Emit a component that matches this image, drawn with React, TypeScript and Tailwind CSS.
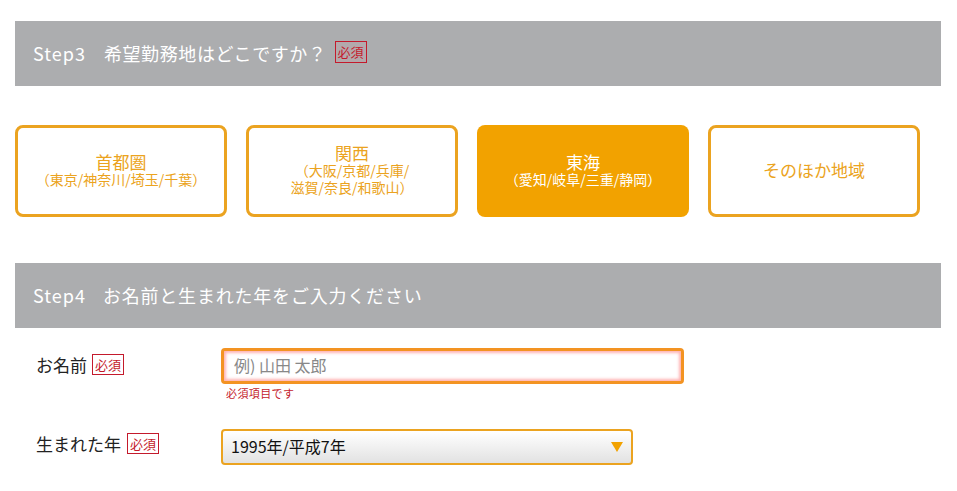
import React from "react";

const font = { fontFamily: '"Noto Sans CJK JP", "Noto Sans", sans-serif' };

function Badge({ className = "" }: { className?: string }) {
  return (
    <span
      className={`inline-flex items-center justify-center border border-[#c41a2c] text-[#c41a2c] text-[13px] leading-none h-[21px] px-[2px] ${className}`}
    >
      必須
    </span>
  );
}

function Area({
  title,
  lines,
  active,
}: {
  title: string;
  lines: string[];
  active?: boolean;
}) {
  return (
    <div
      className={`w-[212px] h-[92px] rounded-[8px] flex flex-col items-center justify-center text-center ${
        active
          ? "bg-[#f2a200] text-white"
          : "border-[3px] border-[#eba320] bg-white text-[#eba320]"
      }`}
    >
      <div className="text-[17px] leading-[18px] mt-[-2px]">{title}</div>
      {lines.map((l, i) => (
        <div key={i} className="text-[14px] leading-[17px]">
          {l}
        </div>
      ))}
    </div>
  );
}

export default function App() {
  return (
    <div className="bg-white w-[957px] h-[491px] overflow-hidden" style={font}>
      <div className="ml-[15px] w-[926px] pt-[21px]">
        <div className="h-[65px] bg-[#acadaf] flex items-center pl-[18px] text-white text-[18px] tracking-[0.6px]">
          <span className="tracking-[1px]">Step3</span>
          <span className="ml-[18px]">希望勤務地はどこですか？</span>
          <Badge className="ml-[8px] mt-[-4px] h-[22px] bg-[#b3a9ac] tracking-normal" />
        </div>

        <div className="flex gap-[19px] mt-[39px]">
          <Area title="首都圏" lines={["（東京/神奈川/埼玉/千葉）"]} />
          <Area title="関西" lines={["（大阪/京都/兵庫/", "滋賀/奈良/和歌山）"]} />
          <Area title="東海" lines={["（愛知/岐阜/三重/静岡）"]} active />
          <Area title="そのほか地域" lines={[]} />
        </div>

        <div className="h-[65px] bg-[#acadaf] flex items-center pl-[18px] text-white text-[18px] tracking-[0.8px] mt-[46px]">
          <span className="tracking-[1px]">Step4</span>
          <span className="ml-[17px]">お名前と生まれた年をご入力ください</span>
        </div>

        <div className="flex mt-[20px]">
          <div className="w-[206px] pl-[21px] pt-[6px] flex items-start text-[17px] text-[#222]">
            <span className="leading-[22px]">お名前</span>
            <Badge className="ml-[5px] bg-white" />
          </div>
          <div>
            <div className="w-[463px] h-[36px] rounded-[4px] border-[3px] border-[#f39322] bg-white flex items-center pl-[10px] shadow-[inset_0_0_3px_2px_#ffb3b3]">
              <span className="text-[16px] text-[#888] mt-[-3px]">例) 山田 太郎</span>
            </div>
            <div className="text-[11px] text-[#c41a2c] leading-[14px] mt-[2px] ml-[5px] tracking-[0.4px]">
              必須項目です
            </div>
          </div>
        </div>

        <div className="flex mt-[29px]">
          <div className="w-[206px] pl-[21px] pt-[4px] flex items-start text-[17px] text-[#222]">
            <span className="leading-[22px]">生まれた年</span>
            <Badge className="ml-[6px] bg-white" />
          </div>
          <div className="w-[412px] h-[36px] rounded-[4px] border-2 border-[#eba320] bg-gradient-to-b from-white to-[#e2e2e2] flex items-center justify-between pl-[8px] pr-[8px]">
            <span className="text-[16px] text-[#111] mt-[-3px]">1995年/平成7年</span>
            <svg width="12" height="10" viewBox="0 0 12 10">
              <polygon points="0,0 12,0 6,10" fill="#f2a200" />
            </svg>
          </div>
        </div>
      </div>
    </div>
  );
}
